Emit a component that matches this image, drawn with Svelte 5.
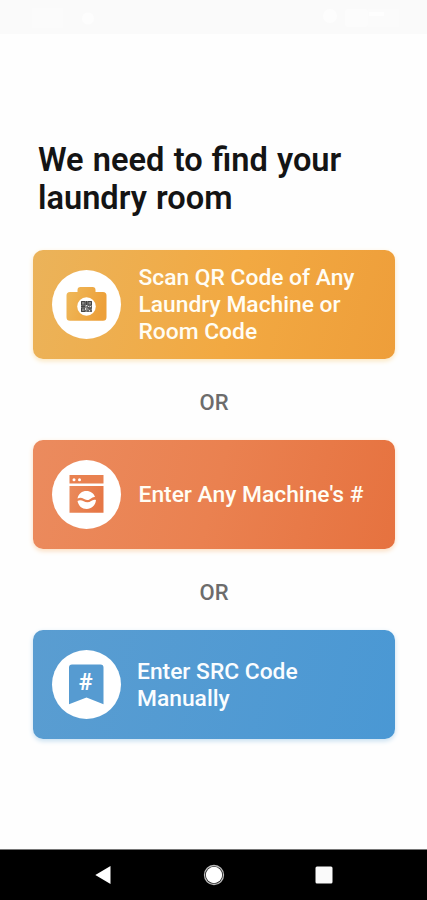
<script>
  const options = [
    { id: 'scan', lines: ['Scan QR Code of Any', 'Laundry Machine or', 'Room Code'] },
    { id: 'machine', lines: ["Enter Any Machine's #"] },
    { id: 'src', lines: ['Enter SRC Code', 'Manually'] }
  ];
</script>

<div class="screen">
  <div class="status">
    <svg width="427" height="33" viewBox="0 0 427 33">
      <rect x="32" y="8" width="31" height="20" fill="#fbfbfb" />
      <circle cx="88" cy="18.500" r="6" fill="#fdfdfd" />
      <circle cx="330" cy="16" r="7" fill="#fdfdfd" />
      <rect x="345" y="9" width="23" height="18" rx="3" fill="#fcfcfc" />
      <rect x="368" y="9" width="31" height="18" fill="#fbfbfb" />
      <rect x="369" y="12" width="15" height="4" fill="#fefefe" />
    </svg>
  </div>

  <main>
    <h1><span>We need to find your</span><span>laundry room</span></h1>

    {#each options as option, i}
      {#if i > 0}
        <div class="or">OR</div>
      {/if}
      <button class="card {option.id}">
        <span class="disc">
          {#if option.id === 'scan'}
            <svg width="69" height="69" viewBox="0 0 69 69">
              <defs>
                <linearGradient id="cam" x1="0" y1="0" x2="1" y2="0.3">
                  <stop offset="0" stop-color="#efb95b" />
                  <stop offset="1" stop-color="#eda039" />
                </linearGradient>
              </defs>
              <path fill="url(#cam)" d="M18 22H25.500V20Q25.500 17 28.500 17H40.500Q43.500 17 43.500 20V22H51Q54.500 22 54.500 25.500V47.200Q54.500 50.700 51 50.700H18Q14.500 50.700 14.500 47.200V25.500Q14.500 22 18 22Z" />
              <circle cx="34.500" cy="36.500" r="9.300" fill="#fff" />
              <path fill="#888" d="M29 31H40V42H29Z" />
              <path fill="none" stroke="#444" stroke-width="1" d="M29.500 31.500h3.500v3.500h-3.500zM36 31.500h3.500v3.500H36zM29.500 38h3.500v3.500h-3.500zM34.500 31v4M29 36.500h4M35 37h2v2h2v-2h1M35 41h2M39 40v2" />
              <path fill="#ddd" d="M34 35h1v1h-1zM36 36h1v1h-1zM33 38h1v2h-1zM37 40h1v1h-1zM38 36h1v1h-1z" />
            </svg>
          {:else if option.id === 'machine'}
            <svg width="69" height="69" viewBox="0 0 69 69">
              <defs>
                <linearGradient id="wash" x1="0" y1="0" x2="1" y2="0.3">
                  <stop offset="0" stop-color="#ea8b5c" />
                  <stop offset="1" stop-color="#e67746" />
                </linearGradient>
              </defs>
              <path fill="#e98150" d="M17.500 15H51.500V23.500H17.500Z" />
              <path fill="url(#wash)" d="M17.500 26H51.500V52.700H17.500Z" />
              <circle cx="22" cy="19.700" r="1.500" fill="#fff" />
              <circle cx="27.500" cy="19.700" r="1.500" fill="#fff" />
              <path fill="#fff" d="M25.500 38.500C26.500 33.500 30 31 34.500 31C38.500 31 42 33.500 43 37C39.500 36.500 38.500 40.500 35 40C31.500 39.500 30 36.500 25.500 38.500Z" />
              <path fill="#fff" d="M25.500 41C29.500 38.500 32 42.500 35.500 42.300C39 42 40.500 38.500 44 40C43.500 45.500 39.500 49 34.700 49C30 49 26.500 46 25.500 41Z" />
            </svg>
          {:else}
            <svg width="69" height="69" viewBox="0 0 69 69">
              <path fill="#569bd1" d="M20 14.500H48.500Q51.500 14.500 51.500 17.500V54.300L34.500 47.500L17 54.300V17.500Q17 14.500 20 14.500Z" />
              <text x="33.800" y="39.700" text-anchor="middle" class="hash">#</text>
            </svg>
          {/if}
        </span>
        <span class="label">
          {#each option.lines as line}<span>{line}</span>{/each}
        </span>
      </button>
    {/each}
  </main>

  <nav>
    <svg width="16" height="20" viewBox="0 0 16 20"><path d="M.3 10L15.500 1V19Z" fill="#fff" /></svg>
    <svg class="home" width="22" height="22" viewBox="0 0 22 22">
      <circle cx="11" cy="11" r="9.500" fill="none" stroke="#bbb" stroke-width="1.300" />
      <circle cx="11" cy="11" r="8.200" fill="#fff" />
    </svg>
    <svg width="18" height="18" viewBox="0 0 18 18"><rect x=".5" y=".5" width="17" height="17" rx="1.500" fill="#fafafa" /></svg>
  </nav>
</div>

<style>
  .screen {
    width: 427px;
    height: 900px;
    display: flex;
    flex-direction: column;
    background: #fefefe;
    font-family: Roboto, sans-serif;
    overflow: hidden;
  }
  .status { height: 33.500px; flex: none; background: #fafafa; }
  .status svg { display: block; }
  main { flex: 1; padding: 107.500px 32px 0 33px; }
  h1 {
    margin: 0 0 33px 5px;
    color: #141414;
    font-size: 32.600px;
    word-spacing: 1.100px;
    line-height: 38px;
    font-weight: 600;
    white-space: nowrap;
  }
  h1 span, .label span { display: block; }
  .card {
    width: 362px;
    height: 109px;
    display: flex;
    align-items: center;
    border: 0;
    border-radius: 10px;
    padding: 0 0 0 19px;
    margin: 0;
    gap: 17.500px;
    font: 500 22.800px/27px Roboto, sans-serif;
    color: #fffdf4;
    text-align: left;
    white-space: nowrap;
  }
  .scan { background: linear-gradient(105deg, #ebb35a, #f2a942 55%, #ee9e3a); box-shadow: 0 2px 5px #fbe6bd; }
  .machine { background: linear-gradient(105deg, #eb8b5e, #ea8150 50%, #e6723f); box-shadow: 0 2px 5px #fbdcbd; }
  .src { gap: 16px; color: #fafdff; background: linear-gradient(105deg, #5a9dd1, #4a98d4); box-shadow: 0 2px 5px #c5def0; }
  .src .label { padding-top: 1px; }
  .disc {
    width: 69px;
    height: 69px;
    flex: none;
    border-radius: 50%;
    background: #fff;
  }
  .disc svg { display: block; }
  .hash { font: 700 23.500px Roboto, sans-serif; fill: #fff; }
  .or {
    height: 81px;
    line-height: 87px;
    text-align: center;
    font-size: 22px;
    font-weight: 500;
    color: #6c6c6c;
  }
  nav {
    height: 51px;
    flex: none;
    background: #000;
    border-top: 1px solid #777;
    box-sizing: border-box;
    display: flex;
    align-items: center;
    gap: 90px;
    padding: 0 0 1px 95px;
  }
  .home { margin: 0 0 0 2px; }
</style>
